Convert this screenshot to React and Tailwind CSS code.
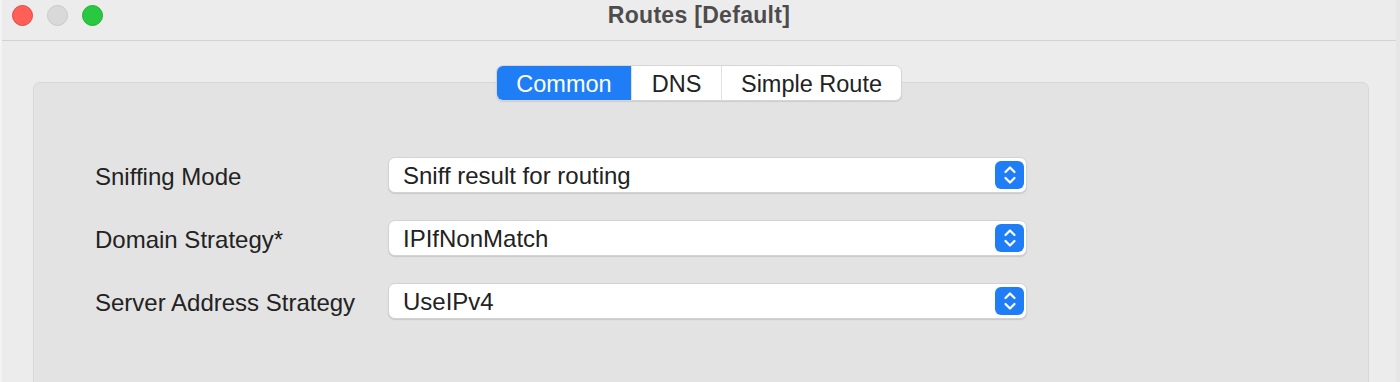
import React, { useState } from "react";

const FONT = { fontFamily: '"Liberation Sans", Arial, sans-serif' };

function Stepper() {
  return (
    <div className="flex h-[28px] w-[29px] shrink-0 items-center justify-center rounded-[6px] bg-[#1f7ef5]">
      <svg width="16" height="22" viewBox="0 0 16 22" fill="none">
        <path d="M3.5 8 L8 3.5 L12.5 8" stroke="white" strokeWidth="2.2" strokeLinecap="round" strokeLinejoin="round" />
        <path d="M3.5 14 L8 18.5 L12.5 14" stroke="white" strokeWidth="2.2" strokeLinecap="round" strokeLinejoin="round" />
      </svg>
    </div>
  );
}

function PopupRow({ label, value }) {
  return (
    <div className="flex items-center">
      <div className="w-[354px] shrink-0 whitespace-nowrap pl-[61px] pt-[3px] text-[24px] leading-none text-[#222]">{label}</div>
      <div className="flex h-[36px] w-[639px] shrink-0 items-center justify-between rounded-[7px] border border-[#d3d3d3] bg-white pl-[14px] pr-[2px] shadow-[0_1px_1px_rgba(0,0,0,0.12)]">
        <span className="pt-[2px] text-[24px] leading-none text-[#222]">{value}</span>
        <Stepper />
      </div>
    </div>
  );
}

export default function App() {
  const [tab, setTab] = useState("Common");
  const tabs = [
    { name: "Common", w: "w-[134px]" },
    { name: "DNS", w: "w-[90px]" },
    { name: "Simple Route", w: "w-[180px]" },
  ];

  return (
    <div className="h-[382px] w-[1400px] overflow-hidden border-l-2 border-r-4 border-l-[#f3f3f3] border-r-[#e6e6e6] bg-[#ececec]" style={FONT}>
      {/* title bar */}
      <div className="relative flex h-[41px] items-center justify-center border-b border-[#d2d2d2] pb-[9px]">
        <div className="absolute left-[10px] top-[5px] flex gap-[14px]">
          <span className="h-[21px] w-[21px] rounded-full border border-[#e2463f] bg-[#ff5f57]" />
          <span className="h-[21px] w-[21px] rounded-full border border-[#c9c9c9] bg-[#d9d9d9]" />
          <span className="h-[21px] w-[21px] rounded-full border border-[#1eae32] bg-[#28c840]" />
        </div>
        <div className="text-[23px] font-bold leading-none tracking-[0.3px] text-[#4c4c4c]">Routes [Default]</div>
      </div>

      {/* body */}
      <div className="flex flex-col pl-[31px] pt-[24px]">
        <div className="flex w-[1336px] justify-center pr-[4px]">
          <div className="relative z-10 flex h-[36px] overflow-hidden rounded-[7px] border border-[#d6d6d6] bg-white shadow-[0_1px_1px_rgba(0,0,0,0.1)]">
            {tabs.map((t, i) => (
              <button
                key={t.name}
                onClick={() => setTab(t.name)}
                className={`${t.w} flex items-center justify-center pt-[3px] text-[23.5px] leading-none ${
                  tab === t.name ? "bg-[#1f7ef5] text-white" : "text-[#222]"
                } ${i > 0 ? "border-l border-[#e0e0e0]" : ""}`}
              >
                {t.name}
              </button>
            ))}
          </div>
        </div>
        <div className="-mt-[19px] h-[320px] w-[1336px] rounded-[7px] border border-[#d8d8d8] bg-[#e3e3e3] pt-[74px]">
          <div className="flex flex-col gap-[27px]">
            <PopupRow label="Sniffing Mode" value="Sniff result for routing" />
            <PopupRow label="Domain Strategy*" value="IPIfNonMatch" />
            <PopupRow label="Server Address Strategy" value="UseIPv4" />
          </div>
        </div>
      </div>
    </div>
  );
}
